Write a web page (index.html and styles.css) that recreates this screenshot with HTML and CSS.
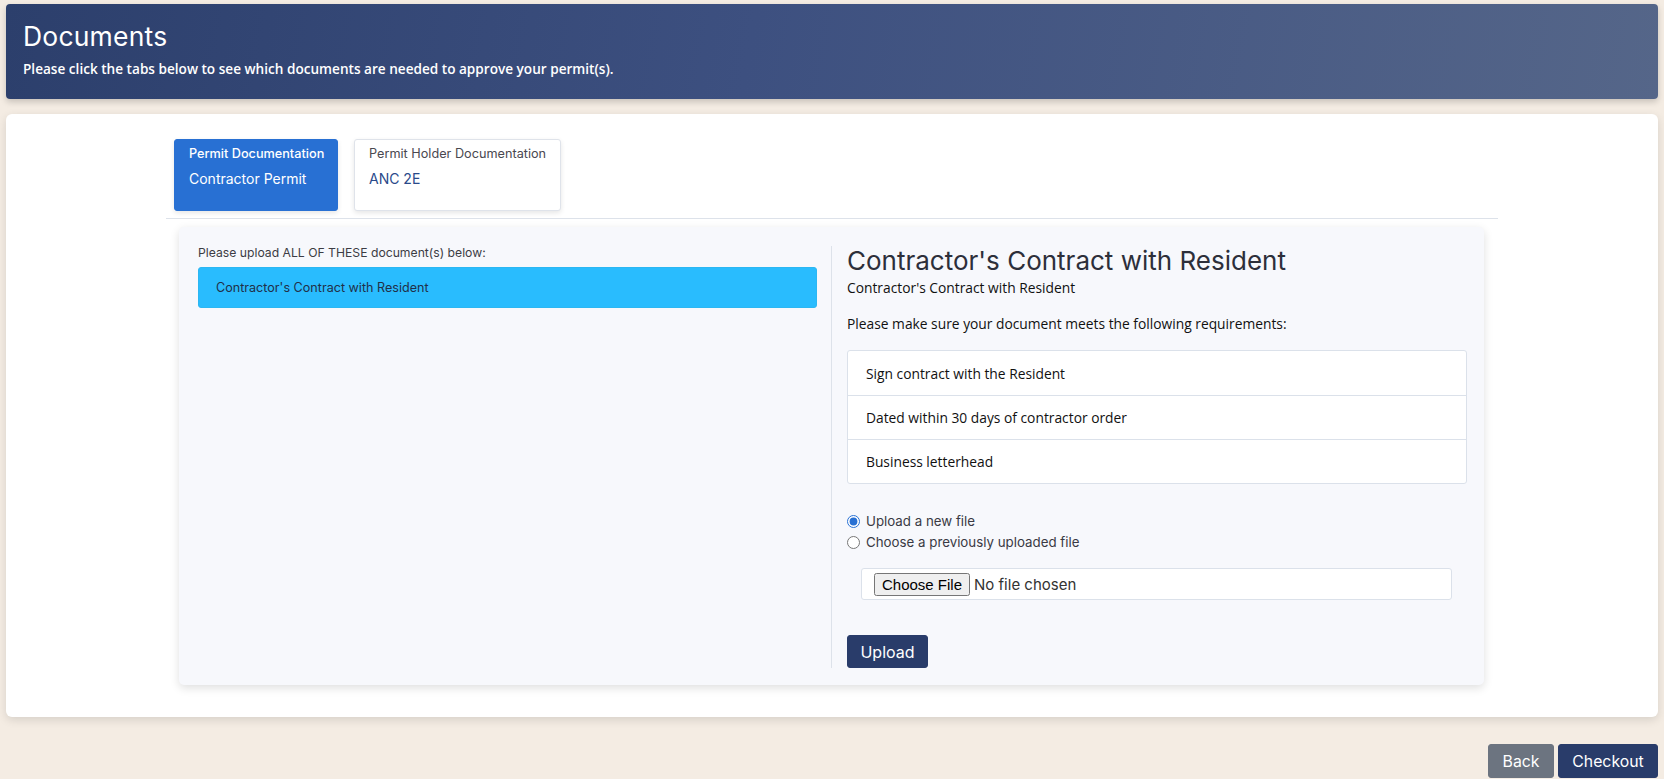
FILE: index.html
```html
<!DOCTYPE html>
<html lang="en">
<head>
<meta charset="utf-8">
<title>Documents</title>
<link rel="stylesheet" href="styles.css">
</head>
<body>
<header class="page-header">
  <h1 class="page-title">Documents</h1>
  <p class="page-subtitle">Please click the tabs below to see which documents are needed to approve your permit(s).</p>
</header>

<main class="card">
  <div class="container">
    <nav class="tabs">
      <div class="tab tab-active">
        <div class="tab-label">Permit Documentation</div>
        <div class="tab-name">Contractor Permit</div>
      </div>
      <div class="tab">
        <div class="tab-label">Permit Holder Documentation</div>
        <div class="tab-name">ANC 2E</div>
      </div>
    </nav>

    <section class="panel">
      <div class="col-left">
        <p class="doc-intro">Please upload ALL OF THESE document(s) below:</p>
        <div class="doc-item">Contractor's Contract with Resident</div>
      </div>
      <div class="col-right">
        <h2 class="doc-title">Contractor's Contract with Resident</h2>
        <p class="doc-desc">Contractor's Contract with Resident</p>
        <p class="doc-req-intro">Please make sure your document meets the following requirements:</p>
        <ul class="req-list">
          <li class="req-item">Sign contract with the Resident</li>
          <li class="req-item">Dated within 30 days of contractor order</li>
          <li class="req-item">Business letterhead</li>
        </ul>
        <div class="radio-group">
          <label class="radio-row"><input type="radio" name="src" checked> <span>Upload a new file</span></label>
          <label class="radio-row"><input type="radio" name="src"> <span>Choose a previously uploaded file</span></label>
        </div>
        <div class="file-wrap">
          <div class="file-control"><input type="file" class="file-input"></div>
        </div>
        <button class="btn btn-primary btn-upload" type="button">Upload</button>
      </div>
    </section>
  </div>
</main>

<footer class="actions">
  <button class="btn btn-secondary" type="button">Back</button>
  <button class="btn btn-primary" type="button">Checkout</button>
</footer>
</body>
</html>
```

FILE: styles.css
```css
* { box-sizing: border-box; }

html, body {
  margin: 0;
  padding: 0;
}

body {
  background: #f4ece3;
  padding: 4px 6px 0 6px;
  font-family: "Open Sans", "Noto Sans", sans-serif;
  color: #212529;
}

.page-header {
  background: linear-gradient(100deg, #2c3f6c 0%, #3d5080 45%, #556689 100%);
  border-radius: 4px;
  padding: 16px 17px 20px 17px;
  box-shadow: 0 3px 6px rgba(0, 0, 0, 0.18);
  color: #fff;
}

.page-title {
  margin: 0;
  font-family: Inter, sans-serif;
  font-weight: 400;
  font-size: 26.5px;
  line-height: 32px;
  letter-spacing: 0.2px;
}

.page-subtitle {
  margin: 6px 0 0 0;
  font-size: 13.6px;
  line-height: 21px;
  font-weight: 600;
}

.card {
  margin-top: 15px;
  background: #fff;
  border-radius: 6px;
  padding: 25px 0 32px 0;
  box-shadow: 0 3px 10px rgba(0, 0, 0, 0.12);
}

.container {
  width: 1332px;
  margin: 0 auto;
}

.tabs {
  display: flex;
  gap: 16px;
  padding: 0 0 7px 8px;
  border-bottom: 1px solid #dde2ea;
}

.tab {
  width: 207px;
  height: 72px;
  padding: 7px 14px;
  border: 1px solid #dfe3ea;
  border-radius: 3px;
  background: #fff;
  box-shadow: 0 2px 5px rgba(0, 0, 0, 0.1);
  font-family: Inter, sans-serif;
  white-space: nowrap;
}

.tab-active {
  width: 164px;
  background: #2870d3;
  border-color: #2870d3;
  color: #fff;
}

.tab-label {
  font-size: 12.7px;
  line-height: 14px;
  color: #4a4850;
}

.tab-active .tab-label {
  font-weight: 500;
}

.tab-name {
  margin-top: 9px;
  font-size: 14px;
  line-height: 18px;
  color: #2a4a8a;
}

.tab-active .tab-label,
.tab-active .tab-name {
  color: #fff;
}

.panel {
  margin: 8px 14px 0 13px;
  padding: 19px 17px 17px 19px;
  background: #f7f8fc;
  border-radius: 5px;
  box-shadow: 0 3px 10px rgba(0, 0, 0, 0.13);
  display: grid;
  grid-template-columns: 633px 1fr;
}

.col-left {
  padding-right: 14px;
}

.doc-intro {
  margin: 0 0 7px 0;
  font-family: Inter, sans-serif;
  font-size: 12.2px;
  line-height: 14px;
  color: #3c3c44;
}

.doc-item {
  height: 41px;
  padding: 0 17px;
  display: flex;
  align-items: center;
  background: #29bcfe;
  border: 1px solid #2cb7f2;
  border-radius: 3px;
  font-family: Inter, sans-serif;
  font-size: 12.6px;
  color: #213048;
}

.col-right {
  border-left: 1px solid #dde2ea;
  padding-left: 15px;
}

.doc-title {
  margin: 0;
  font-family: Inter, sans-serif;
  font-weight: 400;
  font-size: 26px;
  line-height: 29px;
  color: #2d2f3a;
}

.doc-desc {
  margin: 4px 0 0 0;
  font-size: 13.8px;
  line-height: 18px;
  color: #111;
}

.doc-req-intro {
  margin: 18px 0 0 0;
  font-size: 13.8px;
  line-height: 18px;
  color: #111;
}

.req-list {
  list-style: none;
  margin: 17px 0 0 0;
  padding: 0;
  background: #fff;
  border: 1px solid #dbe1ea;
  border-radius: 3px;
}

.req-item {
  height: 44px;
  display: flex;
  align-items: center;
  padding: 0 18px;
  font-size: 13.8px;
  color: #111;
  border-top: 1px solid #dbe1ea;
}

.req-item:first-child {
  border-top: none;
}

.radio-group {
  margin-top: 27px;
  display: flex;
  flex-direction: column;
  gap: 1px;
}

.radio-row {
  display: flex;
  align-items: center;
  gap: 6px;
  height: 20px;
  font-family: Inter, sans-serif;
  font-size: 13.3px;
  color: #3a3a44;
}

.radio-row input {
  margin: 0;
  width: 13px;
  height: 13px;
  accent-color: #2870d3;
}

.file-wrap {
  padding: 16px 15px 0 14px;
}

.file-control {
  height: 32px;
  background: #fff;
  border: 1px solid #dbe1ea;
  border-radius: 3px;
  padding: 3px 12px;
  display: flex;
  align-items: center;
}

.file-input {
  font-family: Inter, sans-serif;
  font-size: 15px;
  color: #333;
}

.btn {
  font-family: Inter, sans-serif;
  font-size: 16px;
  color: #fff;
  border: 1px solid transparent;
  border-radius: 3px;
  cursor: pointer;
}

.btn-primary {
  background: #293c6a;
  border-color: #293c6a;
}

.btn-secondary {
  background: #6c7480;
  border-color: #6c7480;
}

.btn-upload {
  margin-top: 35px;
  width: 81px;
  height: 33px;
  display: block;
  padding: 0;
}

.actions {
  display: flex;
  justify-content: flex-end;
  gap: 4px;
  margin-top: 27px;
}

.actions .btn {
  height: 34px;
  padding: 0 14px;
  font-size: 15.8px;
}

.actions .btn-secondary {
  width: 66px;
  padding: 0;
}

.actions .btn-primary {
  width: 100px;
  padding: 0;
}
```
